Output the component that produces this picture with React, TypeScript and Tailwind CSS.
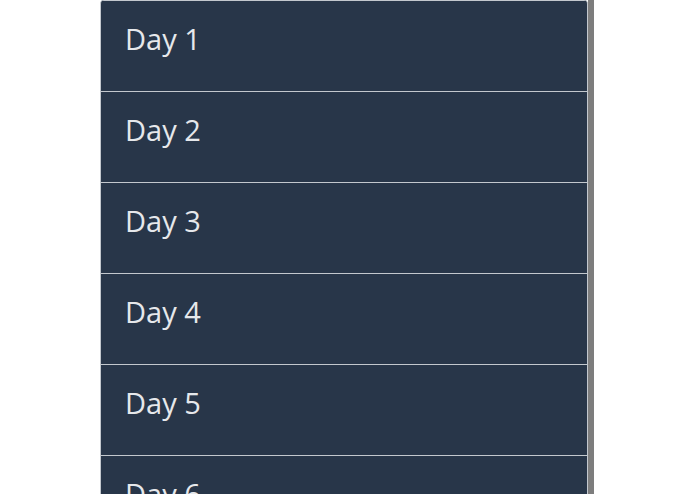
import React from 'react';

const days = ['Day 1', 'Day 2', 'Day 3', 'Day 4', 'Day 5', 'Day 6', 'Day 7'];

const App = () => {
  return (
    <div className="h-[494px] overflow-hidden bg-white">
      <div className="ml-[100px] flex w-[494px]">
        <div className="w-[488px] overflow-hidden rounded-t-[4px] border-x border-[#c3c8ce] bg-[#283649]">
          {days.map((day) => (
            <div
              key={day}
              className="flex h-[91px] items-start border-t border-[#c3c8ce] px-[24px] pt-[17px]"
            >
              <span className="text-[29px] leading-[42px] text-[#e6e8eb] [font-family:'Open_Sans',sans-serif]">
                {day}
              </span>
            </div>
          ))}
        </div>
        <div className="h-[494px] w-[6px] bg-[#7d7d7d]" />
      </div>
    </div>
  );
};

export default App;
